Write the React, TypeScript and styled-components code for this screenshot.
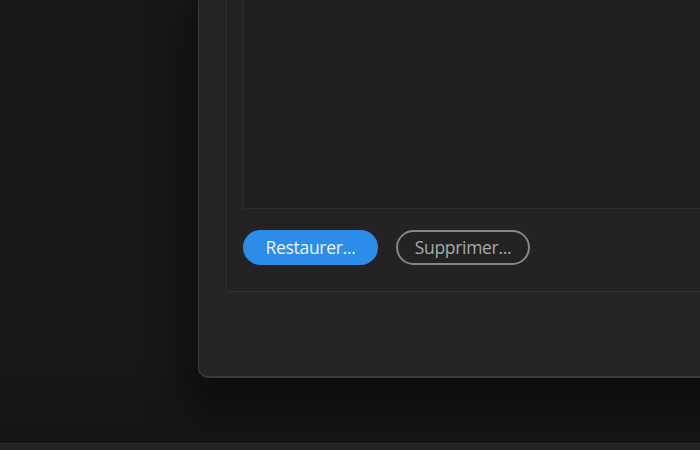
import React from "react";
import styled, { createGlobalStyle } from "styled-components";

const Global = createGlobalStyle`
  html, body { margin: 0; padding: 0; background: #181818; overflow: hidden; }
  * { box-sizing: border-box; }
`;

const Page = styled.div`
  width: 700px;
  height: 450px;
  display: flex;
  flex-direction: column;
  overflow: hidden;
  font-family: "Open Sans", "Noto Sans", sans-serif;
`;

const Stage = styled.div`
  height: 443px;
  display: flex;
  align-items: flex-start;
  padding-left: 198px;
  background: linear-gradient(to bottom, #181818 0%, #181818 80%, #141414 100%);
`;

const Dialog = styled.div`
  flex: 1;
  height: 378px;
  margin-right: -20px;
  background: #252525;
  border-left: 1px solid #3b3b3b;
  border-bottom: 2px solid #3a3a3a;
  border-bottom-left-radius: 10px;
  padding-left: 27px;
  padding-bottom: 84px;
  box-shadow: 0 18px 40px 14px rgba(0, 0, 0, 0.45);
  display: flex;
`;

const Panel = styled.div`
  flex: 1;
  height: 100%;
  background: #232323;
  border-left: 1px solid #2f2f2f;
  border-bottom: 1px solid #2f2f2f;
  border-bottom-left-radius: 3px;
  padding-left: 16px;
  padding-bottom: 26px;
  display: flex;
  flex-direction: column;
  gap: 21px;
`;

const List = styled.div`
  flex: 1;
  background: #1f1f1f;
  border-left: 1px solid #2c2c2c;
  border-bottom: 1px solid #2c2c2c;
`;

const Actions = styled.div`
  display: flex;
  gap: 18px;
  align-items: center;
`;

const Button = styled.button<{ $primary?: boolean }>`
  height: 35px;
  width: ${(p) => (p.$primary ? 135 : 134)}px;
  border-radius: 18px;
  font-family: "Open Sans", "Noto Sans", sans-serif;
  font-size: 17.5px;
  letter-spacing: -0.3px;
  padding: 0 0 1px;
  display: flex;
  align-items: center;
  justify-content: center;
  cursor: pointer;
  background: ${(p) => (p.$primary ? "#2c8de9" : "transparent")};
  color: ${(p) => (p.$primary ? "#eef5fd" : "#a9a9a9")};
  border: ${(p) => (p.$primary ? "none" : "2px solid #858585")};
`;

const Footer = styled.div`
  height: 7px;
  background: #232323;
  border-top: 1px solid #2b2b2b;
`;

export default function App() {
  return (
    <Page>
      <Global />
      <Stage>
        <Dialog>
          <Panel>
            <List />
            <Actions>
              <Button $primary>Restaurer...</Button>
              <Button>Supprimer...</Button>
            </Actions>
          </Panel>
        </Dialog>
      </Stage>
      <Footer />
    </Page>
  );
}
